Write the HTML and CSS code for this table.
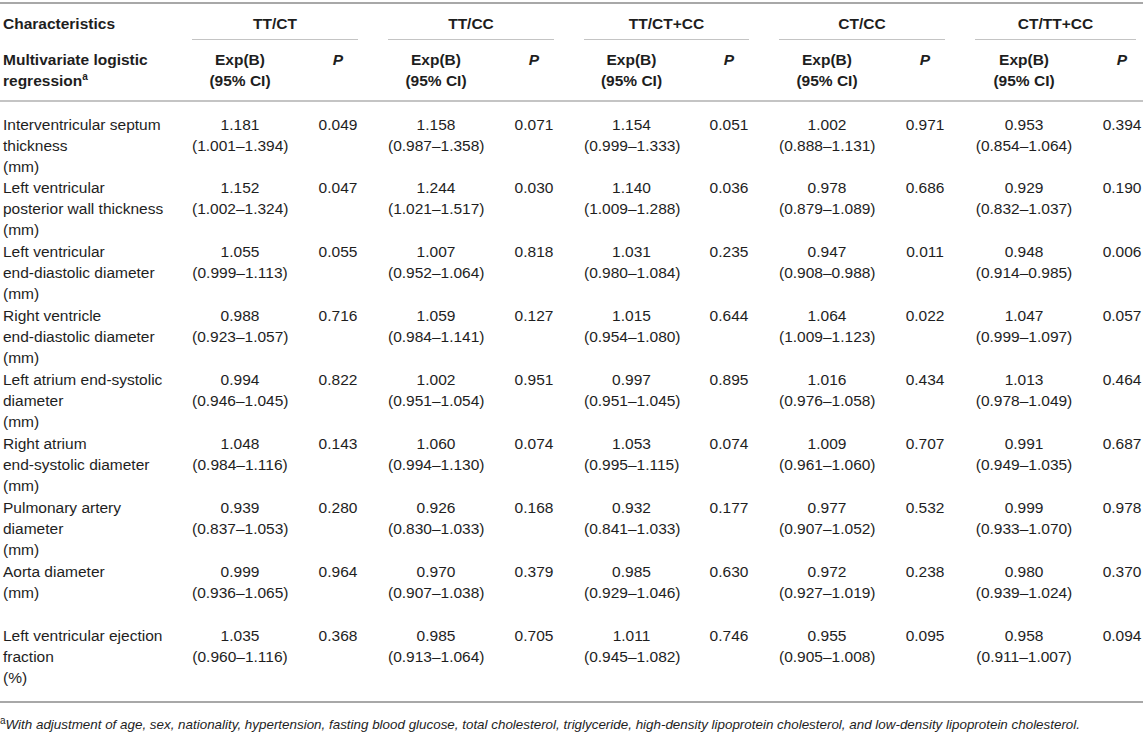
FILE: index.html
```html
<!DOCTYPE html>
<html lang="en">
<head>
    <meta charset="UTF-8">
    <title>Multivariate logistic regression</title>
    <link rel="stylesheet" href="styles.css">
</head>
<body>
    <div class="table-wrap">
        <table class="results">
            <colgroup>
                <col class="c-char">
                <col class="c-exp"><col class="c-p">
                <col class="c-exp"><col class="c-p">
                <col class="c-exp3"><col class="c-p">
                <col class="c-exp4"><col class="c-p">
                <col class="c-exp5"><col class="c-p5">
            </colgroup>
            <thead>
                <tr class="groups">
                    <th class="char">Characteristics</th>
                    <th colspan="2"><div class="grp">TT/CT</div></th>
                    <th colspan="2"><div class="grp">TT/CC</div></th>
                    <th colspan="2"><div class="grp">TT/CT+CC</div></th>
                    <th colspan="2"><div class="grp">CT/CC</div></th>
                    <th colspan="2" class="last"><div class="grp">CT/TT+CC</div></th>
                </tr>
                <tr class="subs">
                    <th class="char">Multivariate logistic<br>regression<sup>a</sup></th>
                    <th>Exp(B)<br>(95% CI)</th><th><i>P</i></th>
                    <th>Exp(B)<br>(95% CI)</th><th><i>P</i></th>
                    <th>Exp(B)<br>(95% CI)</th><th><i>P</i></th>
                    <th>Exp(B)<br>(95% CI)</th><th><i>P</i></th>
                    <th>Exp(B)<br>(95% CI)</th><th class="last"><i>P</i></th>
                </tr>
            </thead>
            <tbody>
                <tr>
                    <td class="char">Interventricular septum<br>thickness<br>(mm)</td>
                    <td>1.181<br>(1.001–1.394)</td><td>0.049</td>
                    <td>1.158<br>(0.987–1.358)</td><td>0.071</td>
                    <td>1.154<br>(0.999–1.333)</td><td>0.051</td>
                    <td>1.002<br>(0.888–1.131)</td><td>0.971</td>
                    <td>0.953<br>(0.854–1.064)</td><td class="last">0.394</td>
                </tr>
                <tr>
                    <td class="char">Left ventricular<br>posterior wall thickness<br>(mm)</td>
                    <td>1.152<br>(1.002–1.324)</td><td>0.047</td>
                    <td>1.244<br>(1.021–1.517)</td><td>0.030</td>
                    <td>1.140<br>(1.009–1.288)</td><td>0.036</td>
                    <td>0.978<br>(0.879–1.089)</td><td>0.686</td>
                    <td>0.929<br>(0.832–1.037)</td><td class="last">0.190</td>
                </tr>
                <tr>
                    <td class="char">Left ventricular<br>end-diastolic diameter<br>(mm)</td>
                    <td>1.055<br>(0.999–1.113)</td><td>0.055</td>
                    <td>1.007<br>(0.952–1.064)</td><td>0.818</td>
                    <td>1.031<br>(0.980–1.084)</td><td>0.235</td>
                    <td>0.947<br>(0.908–0.988)</td><td>0.011</td>
                    <td>0.948<br>(0.914–0.985)</td><td class="last">0.006</td>
                </tr>
                <tr>
                    <td class="char">Right ventricle<br>end-diastolic diameter<br>(mm)</td>
                    <td>0.988<br>(0.923–1.057)</td><td>0.716</td>
                    <td>1.059<br>(0.984–1.141)</td><td>0.127</td>
                    <td>1.015<br>(0.954–1.080)</td><td>0.644</td>
                    <td>1.064<br>(1.009–1.123)</td><td>0.022</td>
                    <td>1.047<br>(0.999–1.097)</td><td class="last">0.057</td>
                </tr>
                <tr>
                    <td class="char">Left atrium end-systolic<br>diameter<br>(mm)</td>
                    <td>0.994<br>(0.946–1.045)</td><td>0.822</td>
                    <td>1.002<br>(0.951–1.054)</td><td>0.951</td>
                    <td>0.997<br>(0.951–1.045)</td><td>0.895</td>
                    <td>1.016<br>(0.976–1.058)</td><td>0.434</td>
                    <td>1.013<br>(0.978–1.049)</td><td class="last">0.464</td>
                </tr>
                <tr>
                    <td class="char">Right atrium<br>end-systolic diameter<br>(mm)</td>
                    <td>1.048<br>(0.984–1.116)</td><td>0.143</td>
                    <td>1.060<br>(0.994–1.130)</td><td>0.074</td>
                    <td>1.053<br>(0.995–1.115)</td><td>0.074</td>
                    <td>1.009<br>(0.961–1.060)</td><td>0.707</td>
                    <td>0.991<br>(0.949–1.035)</td><td class="last">0.687</td>
                </tr>
                <tr>
                    <td class="char">Pulmonary artery<br>diameter<br>(mm)</td>
                    <td>0.939<br>(0.837–1.053)</td><td>0.280</td>
                    <td>0.926<br>(0.830–1.033)</td><td>0.168</td>
                    <td>0.932<br>(0.841–1.033)</td><td>0.177</td>
                    <td>0.977<br>(0.907–1.052)</td><td>0.532</td>
                    <td>0.999<br>(0.933–1.070)</td><td class="last">0.978</td>
                </tr>
                <tr>
                    <td class="char">Aorta diameter<br>(mm)</td>
                    <td>0.999<br>(0.936–1.065)</td><td>0.964</td>
                    <td>0.970<br>(0.907–1.038)</td><td>0.379</td>
                    <td>0.985<br>(0.929–1.046)</td><td>0.630</td>
                    <td>0.972<br>(0.927–1.019)</td><td>0.238</td>
                    <td>0.980<br>(0.939–1.024)</td><td class="last">0.370</td>
                </tr>
                <tr>
                    <td class="char">Left ventricular ejection<br>fraction<br>(%)</td>
                    <td>1.035<br>(0.960–1.116)</td><td>0.368</td>
                    <td>0.985<br>(0.913–1.064)</td><td>0.705</td>
                    <td>1.011<br>(0.945–1.082)</td><td>0.746</td>
                    <td>0.955<br>(0.905–1.008)</td><td>0.095</td>
                    <td>0.958<br>(0.911–1.007)</td><td class="last">0.094</td>
                </tr>
            </tbody>
        </table>
        <p class="note"><sup>a</sup><i>With adjustment of age, sex, nationality, hypertension, fasting blood glucose, total cholesterol, triglyceride, high-density lipoprotein cholesterol, and low-density lipoprotein cholesterol.</i></p>
    </div>
</body>
</html>
```

FILE: styles.css
```css
:root {
    --text: #1e1e1e;
    --rule-dark: #a8a8a8;
    --rule-light: #c4c4c4;
}

body {
    margin: 0;
    background: #fff;
    color: var(--text);
    font-family: "Liberation Sans", Arial, sans-serif;
    font-size: 15.5px;
}

.table-wrap {
    width: 1143px;
    padding-top: 2px;
}

.results {
    width: 1143px;
    table-layout: fixed;
    border-collapse: collapse;
    border-top: 2px solid var(--rule-dark);
    border-bottom: 2px solid var(--rule-dark);
    line-height: 21px;
}

.c-char { width: 177px; }
.c-exp { width: 126px; }
.c-exp3 { width: 125px; }
.c-exp4 { width: 126px; }
.c-exp5 { width: 128px; }
.c-p { width: 70px; }
.c-p5 { width: 56px; }

th, td {
    padding: 0 15px;
    text-align: center;
    vertical-align: top;
    white-space: nowrap;
}

th {
    font-weight: bold;
}

.char {
    text-align: left;
    padding-left: 3px;
}

th.last, td.last {
    padding-left: 14px;
    padding-right: 2px;
}

.groups th {
    padding-top: 9px;
}

.groups th.last {
    padding-left: 15px;
    padding-right: 8px;
}

.grp {
    padding-bottom: 5px;
    border-bottom: 1px solid var(--rule-light);
}

.subs th {
    padding-top: 9px;
    padding-bottom: 9px;
    border-bottom: 2px solid var(--rule-light);
}

.subs sup, .note sup {
    font-size: 10px;
    line-height: 0;
}

tbody tr {
    height: 64px;
}

tbody tr:first-child {
    height: 76px;
}

tbody tr:first-child td {
    padding-top: 12px;
}

tbody tr:last-child {
    height: 77px;
}

.note {
    margin: 11px 0 0;
    font-size: 13.4px;
    line-height: 21px;
    white-space: nowrap;
}
```
